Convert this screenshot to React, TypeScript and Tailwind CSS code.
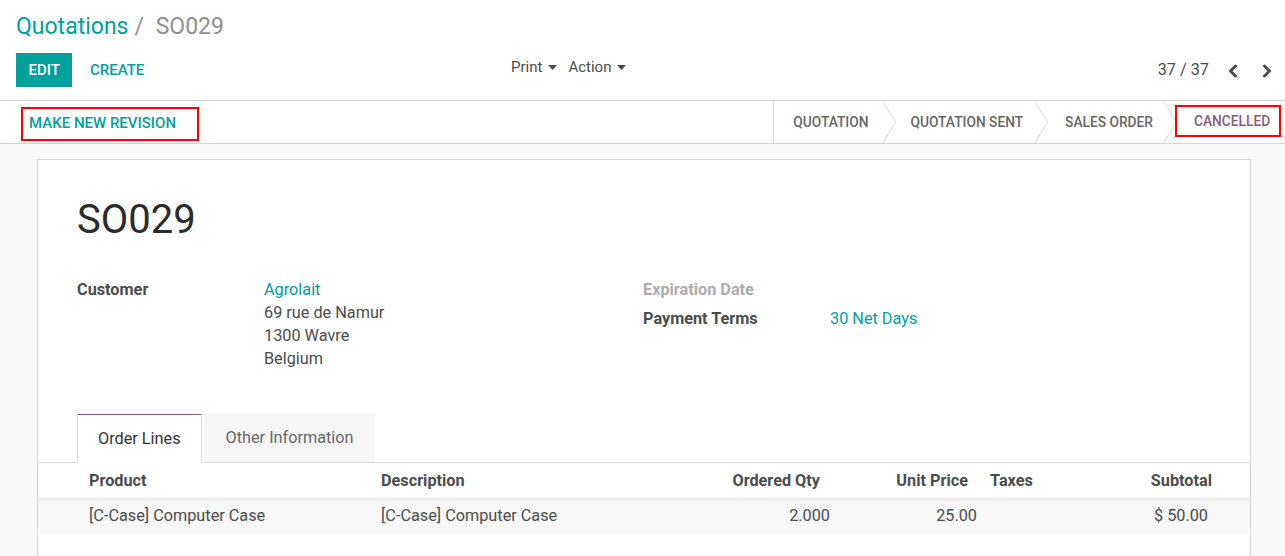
import React from 'react';

const Caret = () => (
  <svg width="9" height="5" viewBox="0 0 9 5" className="ml-[6px]">
    <path d="M0 0h9L4.5 5z" fill="currentColor" />
  </svg>
);

const StatusChevron = () => (
  <svg width="14" height="42" viewBox="0 0 14 42" className="shrink-0">
    <polyline points="0.5,0 13.5,21 0.5,42" fill="none" stroke="#d9d9d9" strokeWidth="1" />
  </svg>
);

const PagerArrow = ({ dir }: { dir: 'left' | 'right' }) => (
  <svg width="10" height="14" viewBox="0 0 10 14">
    <polyline
      points={dir === 'left' ? '7.5,2 2.5,7 7.5,12' : '2.5,2 7.5,7 2.5,12'}
      fill="none"
      stroke="#4c4c4c"
      strokeWidth="3"
      strokeLinecap="round"
      strokeLinejoin="round"
    />
  </svg>
);

const lines = [
  { product: '[C-Case] Computer Case', description: '[C-Case] Computer Case', qty: '2.000', price: '25.00', taxes: '', subtotal: '$ 50.00' },
];

const App = () => {
  return (
    <div className="min-h-screen bg-[#f9f9f9] font-['Roboto',sans-serif] text-[#4c4c4c]">
      {/* control panel */}
      <div className="h-[101px] border-b border-[#d4d4d4] bg-white">
        <div className="pl-[16px] pt-[10px] text-[23px] leading-[33px]">
          <span className="text-[#00A09D]">Quotations</span>
          <span className="px-[6px] text-[#8f8f8f]">/&nbsp;</span>
          <span className="text-[#8f8f8f]">SO029</span>
        </div>
        <div className="mt-[10px] flex h-[34px] items-center">
          <div className="flex w-[511px] pl-[16px]">
            <button className="h-[34px] bg-[#00A09D] px-[12.5px] pt-[1px] text-[15px] font-medium text-white">EDIT</button>
            <button className="ml-[5px] h-[34px] px-[12.5px] pt-[1px] text-[15px] font-medium text-[#00A09D]">CREATE</button>
          </div>
          <div className="mb-[6px] flex items-center text-[15px] text-[#4c4c4c]">
            <span>Print</span>
            <Caret />
            <span className="ml-[11px]">Action</span>
            <Caret />
          </div>
          <div className="ml-auto flex items-center pr-[13px] pt-[1px]">
            <span className="text-[16.25px]">37 / 37</span>
            <span className="ml-[19px]">
              <PagerArrow dir="left" />
            </span>
            <span className="ml-[24px]">
              <PagerArrow dir="right" />
            </span>
          </div>
        </div>
      </div>

      {/* status bar */}
      <div className="flex h-[43px] border-b border-[#d4d4d4] bg-white">
        <div className="flex-1 pl-[21px]">
          <button className="mt-[6px] h-[34px] w-[178px] border-2 border-[#ff0000] pb-[1px] pl-[6px] text-left text-[15px] font-medium text-[#00A09D]">
            MAKE NEW REVISION
          </button>
        </div>
        <div className="flex border-l border-[#dcdcdc] text-[13.75px] font-medium text-[#666666]">
          <span className="flex items-center pl-[19px] pr-[13px]">QUOTATION</span>
          <StatusChevron />
          <span className="flex items-center pl-[15px] pr-[11px]">QUOTATION SENT</span>
          <StatusChevron />
          <span className="flex items-center pl-[17px] pr-[10px]">SALES ORDER</span>
          <StatusChevron />
          <div className="-ml-[2px] mr-[4px] mt-[4px] flex h-[32px] w-[106px] items-center border-2 border-[#ff0000] pl-[17px] text-[#875A7B]">
            CANCELLED
          </div>
        </div>
      </div>

      {/* sheet */}
      <div className="pt-[15px]">
        <div className="ml-[37px] min-h-[420px] w-[1214px] border border-[#d6d6d6] bg-white">
          <div className="pl-[39px] pt-[38px]">
            <h1 className="text-[40px] leading-[44px] text-[#2b2b2b]">SO029</h1>

            <div className="mt-[36px] flex text-[16.25px] leading-[23px]">
              <div className="flex w-[566px]">
                <div className="w-[187px] font-bold">Customer</div>
                <div>
                  <div className="text-[#00A09D]">Agrolait</div>
                  <div>69 rue de Namur</div>
                  <div>1300 Wavre</div>
                  <div>Belgium</div>
                </div>
              </div>
              <div>
                <div className="flex h-[29px]">
                  <div className="w-[187px] font-bold text-[#acacac]">Expiration Date</div>
                </div>
                <div className="flex">
                  <div className="w-[187px] font-bold">Payment Terms</div>
                  <div className="text-[#00A09D]">30 Net Days</div>
                </div>
              </div>
            </div>
          </div>

          {/* tabs */}
          <div className="mt-[44px] flex border-b border-[#dcdcdc] pl-[39px] text-[16.25px]">
            <div className="-mb-[1px] flex h-[49px] items-center border-x border-t border-x-[#dcdcdc] border-t-[#875A7B] bg-white px-[20px] text-[#333333]">
              Order Lines
            </div>
            <div className="ml-[3px] flex h-[48px] items-center bg-[#f6f6f6] px-[21px] text-[#666666]">
              Other Information
            </div>
          </div>

          {/* order lines */}
          <div className="relative z-10 grid h-[35px] grid-cols-[292px_323px_134px_148px_78px_153px] items-center bg-white pl-[47px] pt-[2px] text-[16.25px] font-bold shadow-[0_2px_3px_rgba(0,0,0,0.08)]">
            <div className="pl-[4px]">Product</div>
            <div className="pl-[4px]">Description</div>
            <div className="pr-[14px] text-right">Ordered Qty</div>
            <div className="pr-[14px] text-right">Unit Price</div>
            <div className="pl-[8px]">Taxes</div>
            <div className="pr-[1px] text-right">Subtotal</div>
          </div>
          {lines.map((line, i) => (
            <div
              key={i}
              className="grid h-[35px] grid-cols-[292px_323px_134px_148px_78px_153px] items-center bg-[#f7f7f7] pl-[47px] pt-[2px] text-[16.25px]"
            >
              <div className="pl-[4px]">{line.product}</div>
              <div className="pl-[4px]">{line.description}</div>
              <div className="pr-[4px] text-right">{line.qty}</div>
              <div className="pr-[5px] text-right">{line.price}</div>
              <div className="pl-[8px]">{line.taxes}</div>
              <div className="pr-[5px] text-right">{line.subtotal}</div>
            </div>
          ))}
        </div>
      </div>
    </div>
  );
};

export default App;
